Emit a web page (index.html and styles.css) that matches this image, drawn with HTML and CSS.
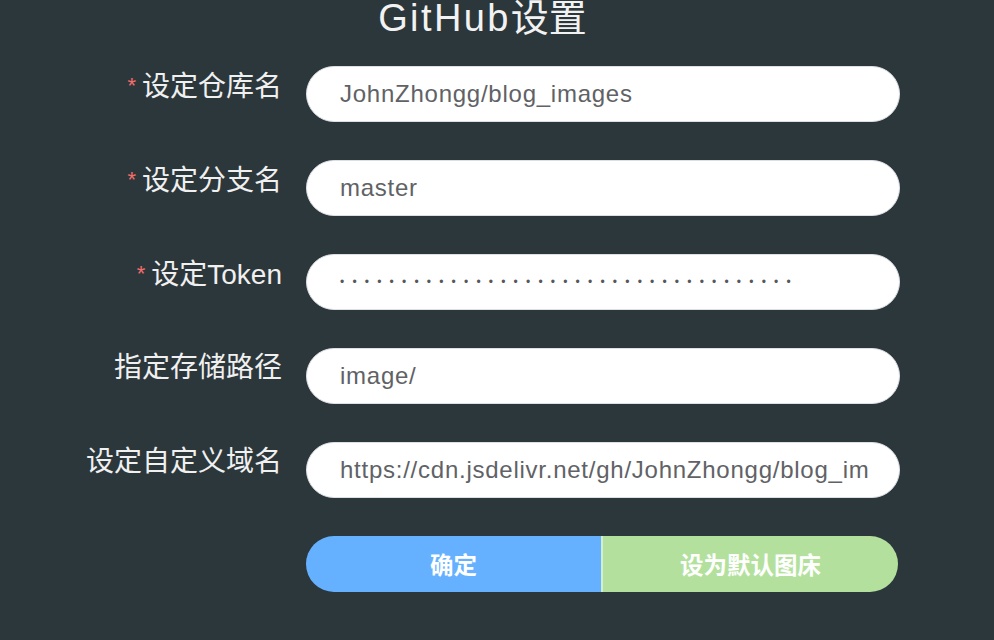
FILE: index.html
```html
<!DOCTYPE html>
<html lang="zh-CN">
<head>
<meta charset="utf-8">
<title>GitHub设置</title>
<link rel="stylesheet" href="styles.css">
</head>
<body>
<div class="page">
  <h1 class="title"><span class="title-latin">GitHub</span>设置</h1>
  <form class="form">
    <label class="label"><span class="req">*</span>设定仓库名</label>
    <div class="field"><span class="value">JohnZhongg/blog_images</span></div>

    <label class="label"><span class="req">*</span>设定分支名</label>
    <div class="field"><span class="value">master</span></div>

    <label class="label"><span class="req">*</span>设定Token</label>
    <div class="field"><span class="dots">•••••••••••••••••••••••••••••••••••••</span></div>

    <label class="label">指定存储路径</label>
    <div class="field"><span class="value">image/</span></div>

    <label class="label">设定自定义域名</label>
    <div class="field"><span class="value">https://cdn.jsdelivr.net/gh/JohnZhongg/blog_images/</span></div>

    <div class="spacer"></div>
    <div class="buttons">
      <button type="button" class="btn btn-primary">确定</button>
      <button type="button" class="btn btn-success">设为默认图床</button>
    </div>
  </form>
</div>
</body>
</html>
```

FILE: styles.css
```css
html, body {
  margin: 0;
  padding: 0;
  background: #2c373b;
  height: 100%;
  overflow: hidden;
}

.page {
  font-family: "Liberation Sans", "Noto Sans CJK SC", sans-serif;
  color: #ffffff;
}

.title {
  width: 965px;
  margin: -2px 0 0 0;
  font-size: 38px;
  line-height: 40px;
  font-weight: normal;
  text-align: center;
  color: #f2f2f2;
}

.title-latin {
  letter-spacing: 2.4px;
}

.form {
  display: grid;
  grid-template-columns: 282px 594px;
  column-gap: 24px;
  row-gap: 38px;
  margin-top: 28px;
}

.label {
  text-align: right;
  font-size: 28px;
  line-height: 40px;
  color: #f0f0f0;
}

.req {
  color: #f56c6c;
  font-size: 22px;
  margin-right: 6px;
  vertical-align: 3px;
}

.field {
  box-sizing: border-box;
  height: 56px;
  border: 1px solid #dcdfe6;
  border-radius: 28px;
  background: #ffffff;
  display: flex;
  align-items: center;
  padding: 0 30px 0 33px;
  overflow: hidden;
}

.value {
  font-size: 24px;
  letter-spacing: 0.75px;
  color: #606266;
  white-space: nowrap;
  overflow: hidden;
}

.dots {
  font-size: 12px;
  letter-spacing: 8.2px;
  color: #55575c;
  white-space: nowrap;
}

.buttons {
  display: flex;
  width: 592px;
  height: 56px;
}

.btn {
  flex: 1;
  border: none;
  margin: 0;
  height: 56px;
  font-family: "Liberation Sans", "Noto Sans CJK SC", sans-serif;
  font-size: 23.5px;
  font-weight: bold;
  color: #ffffff;
  cursor: pointer;
}

.btn-primary {
  background: #66b1ff;
  border-radius: 28px 0 0 28px;
}

.btn-success {
  background: #b3e19d;
  border-left: 2px solid #d6edcc;
  border-radius: 0 28px 28px 0;
}
```
